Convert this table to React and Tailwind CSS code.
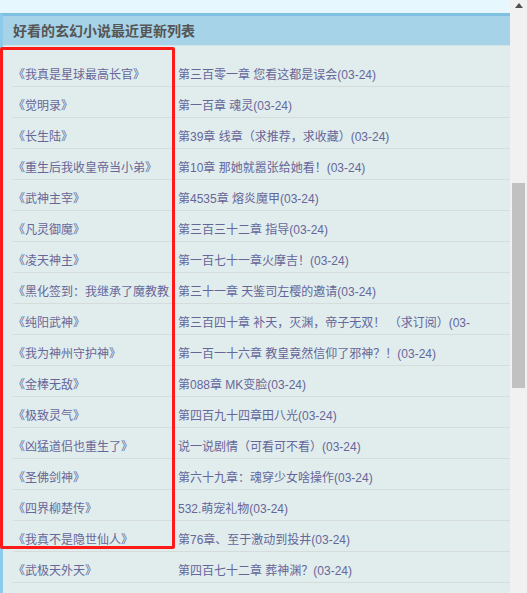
const rows = [
  ["《我真是星球最高长官》", "第三百零一章 您看这都是误会(03-24)"],
  ["《觉明录》", "第一百章 魂灵(03-24)"],
  ["《长生陆》", "第39章 线章（求推荐，求收藏）(03-24)"],
  ["《重生后我收皇帝当小弟》", "第10章 那她就嚣张给她看！(03-24)"],
  ["《武神主宰》", "第4535章 熔炎魔甲(03-24)"],
  ["《凡灵御魔》", "第三百三十二章 指导(03-24)"],
  ["《凌天神主》", "第一百七十一章火摩吉！(03-24)"],
  ["《黑化签到：我继承了魔教教主之位》", "第三十一章 天鉴司左樱的邀请(03-24)"],
  ["《纯阳武神》", "第三百四十章 补天，灭渊，帝子无双！ （求订阅）(03-24)"],
  ["《我为神州守护神》", "第一百一十六章 教皇竟然信仰了邪神？！(03-24)"],
  ["《金棒无敌》", "第088章 MK变脸(03-24)"],
  ["《极致灵气》", "第四百九十四章田八光(03-24)"],
  ["《凶猛道侣也重生了》", "说一说剧情（可看可不看）(03-24)"],
  ["《圣佛剑神》", "第六十九章：魂穿少女啥操作(03-24)"],
  ["《四界柳楚传》", "532.萌宠礼物(03-24)"],
  ["《我真不是隐世仙人》", "第76章、至于激动到投井(03-24)"],
  ["《武极天外天》", "第四百七十二章 葬神渊？(03-24)"],
];

export default function App() {
  return (
    <div
      className="relative w-[528px] h-[593px] overflow-hidden bg-[#e6f8fd] flex"
      style={{ fontFamily: "'Liberation Sans','Noto Sans CJK SC',sans-serif" }}
    >
      <div className="w-[510px] pt-[13px] flex flex-col">
        <div className="flex-1 border-t-[3px] border-l-[3px] border-t-[#80c1e3] border-l-[#8ecbea] flex flex-col">
          <div className="h-[30px] bg-[#a6d3e8] pl-[10px] flex items-center border-b border-b-[#d2e2e6]">
            <span className="text-[14px] font-bold text-[#555555] leading-none">好看的玄幻小说最近更新列表</span>
          </div>
          <div className="flex-1 bg-[#e1eded] pt-[10px] pl-[10px]">
            {rows.map(([t, c], i) => (
              <div
                key={i}
                className="h-[31px] border-b border-b-[#d6dbdb] flex text-[12px] leading-[22px] pt-[8px] text-[#666699] whitespace-nowrap"
              >
                <div className="w-[165px] shrink-0">
                  <div className="w-[157px] overflow-hidden">{t}</div>
                </div>
                <div className="w-[292px] overflow-hidden">{c}</div>
              </div>
            ))}
          </div>
        </div>
      </div>
      <div className="w-[18px] bg-[#f1f1f1] flex flex-col items-center border-r border-r-[#d8d8d8]">
        <svg width="8" height="5" viewBox="0 0 8 5" className="mt-[3px]">
          <polygon points="4,0 8,5 0,5" fill="#505050" />
        </svg>
        <div className="mt-[175px] w-[13px] h-[205px] bg-[#c1c1c1]" />
      </div>
      <div className="absolute left-0 top-[47px] w-[175px] h-[502px] border-[3px] border-[#ff1a1a] rounded-[2px]" />
    </div>
  );
}
